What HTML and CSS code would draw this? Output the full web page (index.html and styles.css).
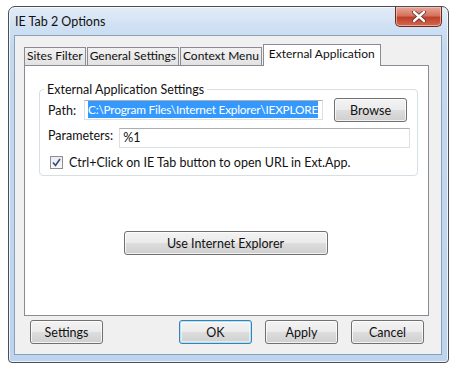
FILE: index.html
```html
<!DOCTYPE html>
<html lang="en">
<head>
    <meta charset="UTF-8">
    <title>IE Tab 2 Options</title>
    <link rel="stylesheet" href="styles.css">
</head>
<body>
    <div class="window">
        <div class="titlebar">
            <span class="title">IE Tab 2 Options</span>
            <button class="close-btn">
                <svg width="14" height="11" viewBox="0 0 14 11">
                    <path d="M2 1 L12 10 M12 1 L2 10" stroke="#5a2a24" stroke-width="4" stroke-linecap="round"/>
                    <path d="M2 1 L12 10 M12 1 L2 10" stroke="#ffffff" stroke-width="2.4" stroke-linecap="round"/>
                </svg>
            </button>
        </div>

        <div class="client">
            <div class="tabs">
                <div class="tab">Sites Filter</div>
                <div class="tab">General Settings</div>
                <div class="tab">Context Menu</div>
                <div class="tab active">External Application</div>
            </div>

            <div class="panel">
                <fieldset class="group">
                    <legend>External Application Settings</legend>
                    <div class="row">
                        <label class="label path-label">Path:</label>
                        <div class="input path-input"><span class="selected">C:\Program Files\Internet Explorer\IEXPLORE</span></div>
                        <button class="btn browse-btn">Browse</button>
                    </div>
                    <div class="row">
                        <label class="label">Parameters:</label>
                        <div class="input param-input">%1</div>
                    </div>
                    <div class="row check-row">
                        <span class="checkbox">
                            <svg width="9" height="9" viewBox="0 0 9 9">
                                <path d="M1 4.5 L3.5 7.5 L8 1" fill="none" stroke="#3b4a7a" stroke-width="1.6"/>
                            </svg>
                        </span>
                        <span>Ctrl+Click on IE Tab button to open URL in Ext.App.</span>
                    </div>
                </fieldset>

                <div class="center-row">
                    <button class="btn wide-btn">Use Internet Explorer</button>
                </div>
            </div>

            <div class="footer">
                <button class="btn">Settings</button>
                <div class="footer-right">
                    <button class="btn default-btn">OK</button>
                    <button class="btn">Apply</button>
                    <button class="btn">Cancel</button>
                </div>
            </div>
        </div>
    </div>
</body>
</html>
```

FILE: styles.css
```css
* {
    margin: 0;
    padding: 0;
    box-sizing: border-box;
    font-family: 'Lato', 'Noto Sans', sans-serif;
}

body {
    background: #ffffff;
    width: 455px;
    height: 366px;
    overflow: hidden;
}

.window {
    margin: 6px 0 0 8px;
    width: 441px;
    height: 357px;
    border: 1px solid #4a4f57;
    border-radius: 7px 7px 4px 4px;
    background: linear-gradient(to bottom, #e3ecf7 0px, #cfe0f3 20px, #c4d9f0 40px, #bcd4ee 100%);
    box-shadow: inset 0 0 0 1px rgba(255, 255, 255, 0.7);
    display: flex;
    flex-direction: column;
}

.titlebar {
    height: 28px;
    display: flex;
    align-items: flex-start;
    justify-content: space-between;
    padding-left: 6px;
}

.title {
    font-size: 12.5px;
    color: #111;
    margin-top: 7px;
}

.close-btn {
    width: 47px;
    height: 20px;
    margin-right: 6px;
    border: 1px solid #6e2a22;
    border-top: none;
    border-radius: 0 0 5px 5px;
    background: linear-gradient(to bottom, #e7a79a 0%, #d6735f 45%, #c0402a 55%, #cf6a4e 100%);
    box-shadow: inset 0 0 0 1px rgba(255, 210, 200, 0.6);
    display: flex;
    align-items: center;
    justify-content: center;
}

.client {
    flex: 1;
    margin: 0 6px 7px 5px;
    background: #f0f0f0;
    border: 1px solid #8aa0b8;
    display: flex;
    flex-direction: column;
    padding: 8px 12px 0 9px;
}

.tabs {
    display: flex;
    align-items: flex-end;
    height: 21px;
    position: relative;
    z-index: 1;
}

.tab {
    height: 18px;
    padding: 0 2px;
    margin-right: 1px;
    font-size: 12px;
    line-height: 16px;
    color: #111;
    border: 1px solid #898c95;
    border-bottom: none;
    background: linear-gradient(to bottom, #f2f2f2, #e2e2e2);
}

.tab.active {
    padding: 1px 5px 0;
    background: #ffffff;
    margin-bottom: -1px;
    height: 22px;
}

.panel {
    height: 251px;
    background: #ffffff;
    border: 1px solid #898c95;
    padding: 16px 13px 0 14px;
}

.group {
    border: 1px solid #d5dfe5;
    border-radius: 4px;
    padding: 1px 7px 6px 8px;
    height: 94px;
}

.group legend {
    font-size: 12.5px;
    color: #111;
    padding: 0 3px;
    margin-left: -4px;
}

.row {
    display: flex;
    align-items: center;
    font-size: 12.5px;
    color: #111;
}

.label {
    font-size: 12.5px;
}

.path-label {
    width: 36px;
}

.input {
    height: 20px;
    border: 1px solid #dbdfe6;
    border-top-color: #abadb3;
    font-size: 12.5px;
    line-height: 17px;
    padding: 0 3px;
    background: #fff;
    overflow: hidden;
    white-space: nowrap;
}

.path-input {
    width: 239px;
    padding-left: 3px;
    padding-right: 0;
}

.selected {
    display: inline-block;
    font-size: 11.8px;
    letter-spacing: -0.2px;
    background: #3399ff;
    color: #fff;
    line-height: 17px;
}

.browse-btn {
    margin-left: 11px;
    width: 74px;
    height: 23px;
}

.param-input {
    margin-left: 6px;
    width: 291px;
    margin-top: 6px;
}

.check-row {
    margin-top: 7px;
    gap: 6px;
}

.checkbox {
    width: 13px;
    height: 13px;
    margin-left: 2px;
    border: 1px solid #8f8f8f;
    background: linear-gradient(to bottom, #e9ecf2, #f9f9fb);
    display: flex;
    align-items: center;
    justify-content: center;
}

.center-row {
    display: flex;
    justify-content: center;
    margin-top: 55px;
}

.btn {
    height: 24px;
    font-size: 12.5px;
    color: #111;
    border: 1px solid #707070;
    border-radius: 3px;
    background: linear-gradient(to bottom, #f3f3f3 0%, #ebebeb 48%, #dddddd 52%, #cfcfcf 100%);
    box-shadow: inset 0 0 0 1px rgba(255, 255, 255, 0.75);
    width: 73px;
}

.wide-btn {
    width: 204px;
    margin-left: -3px;
}

.footer {
    display: flex;
    justify-content: space-between;
    padding: 4px 5px 0 6px;
}

.footer-right {
    display: flex;
    gap: 13px;
}

.default-btn {
    border-color: #3c7fb1;
    box-shadow: inset 0 0 0 1px #a8e5f8, inset 0 0 0 2px rgba(255, 255, 255, 0.5);
}
```
